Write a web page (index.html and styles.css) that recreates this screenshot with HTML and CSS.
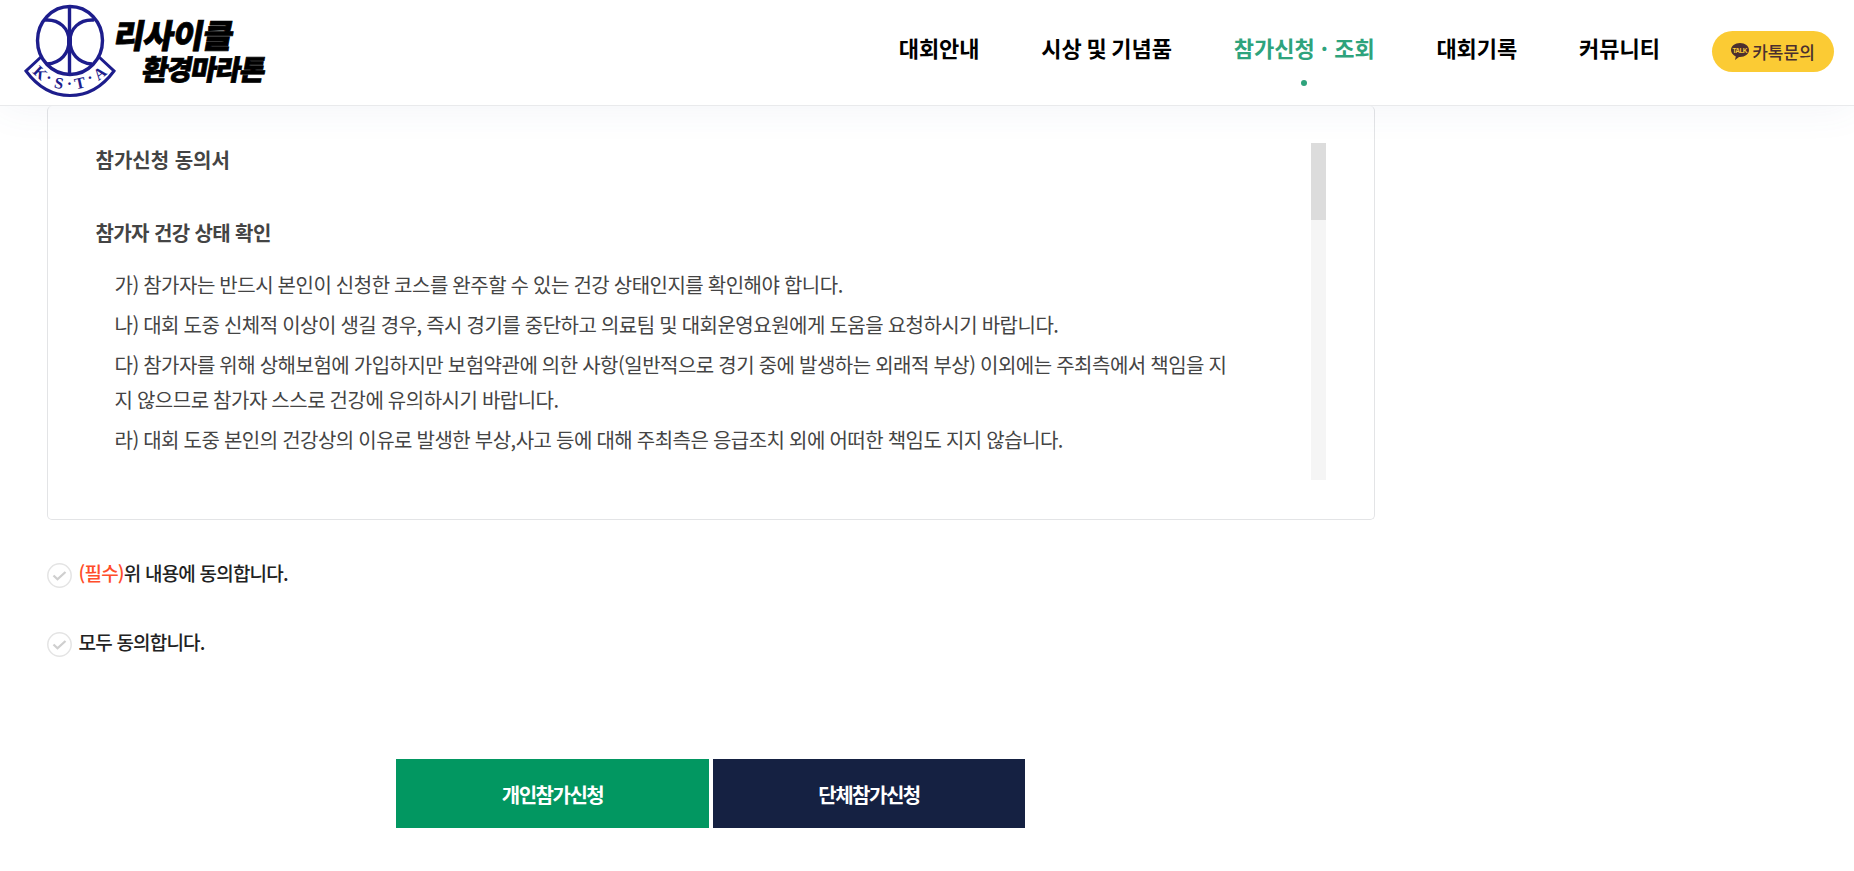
FILE: index.html
```html
<!DOCTYPE html>
<html lang="ko">
<head>
    <meta charset="UTF-8">
    <meta name="viewport" content="width=device-width, initial-scale=1.0">
    <title>리사이클 환경마라톤</title>
    <link rel="stylesheet" href="styles.css">
</head>
<body>

<header class="header">
    <a class="logo" href="#">
        <svg class="logo-mark" width="92" height="94" viewBox="0 0 92 94">
            <g fill="none" stroke="#1d1d8c" stroke-width="3.4">
                <ellipse cx="46" cy="36.500" rx="32.500" ry="34"/>
                <path d="M45.500 3v68"/>
                <path d="M21 16c15-1 24 9 24 21s-8 22-22 23"/>
                <path d="M70 16c-15-1-24 9-24 21s8 22 22 23"/>
                <path stroke-width="3" d="M17 53L2 67Q20 91.500 46 91.500T90 67L75 53"/>
            </g>
            <path d="M43 26h5v22h-5z" fill="#1d1d8c"/>
            <g class="logo-letters">
                <text transform="translate(16 69) rotate(43)" dy="5">K</text>
                <text transform="translate(25 75)" dy="4">·</text>
                <text transform="translate(35 79.500) rotate(12)" dy="5">S</text>
                <text transform="translate(45.500 81)" dy="4">·</text>
                <text transform="translate(56 79.500) rotate(-12)" dy="5">T</text>
                <text transform="translate(66 75)" dy="4">·</text>
                <text transform="translate(76 69.500) rotate(-38)" dy="5">A</text>
            </g>
        </svg>
        <span class="logo-name">
            <span class="logo-line1">리사이클</span>
            <span class="logo-line2">환경마라톤</span>
        </span>
    </a>
    <nav class="gnb">
        <a href="#">대회안내</a>
        <a href="#" class="narrow">시상 및 기념품</a>
        <a href="#" class="on">참가신청 · 조회</a>
        <a href="#">대회기록</a>
        <a href="#">커뮤니티</a>
    </nav>
    <a class="talk" href="#">
        <svg width="18" height="17" viewBox="0 0 18 17">
            <path d="M9 0c5 0 9 3 9 7s-4 7-9 7h-1l-4 3 .8-3.600C2 12.200 0 9.800 0 7c0-4 4-7 9-7z" fill="#4b2f2f"/>
            <text class="talk-text" x="1.500" y="9.700" textLength="15">TALK</text>
        </svg>
        <span>카톡문의</span>
    </a>
</header>

<main class="content">
    <section class="terms">
        <div class="terms-text">
            <h3>참가신청 동의서</h3>
            <h3 class="kern">참가자 건강 상태 확인</h3>
            <ul>
                <li>가) 참가자는 반드시 본인이 신청한 코스를 완주할 수 있는 건강 상태인지를 확인해야 합니다.</li>
                <li>나) 대회 도중 신체적 이상이 생길 경우, 즉시 경기를 중단하고 의료팀 및 대회운영요원에게 도움을 요청하시기 바랍니다.</li>
                <li>다) 참가자를 위해 상해보험에 가입하지만 보험약관에 의한 사항(일반적으로 경기 중에 발생하는 외래적 부상) 이외에는 주최측에서 책임을 지<br>지 않으므로 참가자 스스로 건강에 유의하시기 바랍니다.</li>
                <li>라) 대회 도중 본인의 건강상의 이유로 발생한 부상,사고 등에 대해 주최측은 응급조치 외에 어떠한 책임도 지지 않습니다.</li>
            </ul>
        </div>
        <div class="scrollbar"><div class="thumb"></div></div>
    </section>

    <div class="agree">
        <svg width="25" height="25" viewBox="0 0 25 25" fill="none"><circle cx="12.500" cy="12.500" r="11.700" stroke="#e4e4e4" stroke-width="1.500"/><path d="M6.500 12.500l4 3.800 8-7.300" stroke="#cfcfcf" stroke-width="2.300"/></svg>
        <span><em>(필수)</em>위 내용에 동의합니다.</span>
    </div>
    <div class="agree">
        <svg width="25" height="25" viewBox="0 0 25 25" fill="none"><circle cx="12.500" cy="12.500" r="11.700" stroke="#e4e4e4" stroke-width="1.500"/><path d="M6.500 12.500l4 3.800 8-7.300" stroke="#cfcfcf" stroke-width="2.300"/></svg>
        <span>모두 동의합니다.</span>
    </div>

    <div class="btn-wrap">
        <a href="#" class="btn btn-single">개인참가신청</a>
        <a href="#" class="btn btn-group">단체참가신청</a>
    </div>
</main>

</body>
</html>
```

FILE: styles.css
```css
* {
    box-sizing: border-box;
}

body {
    margin: 0;
    height: 871px;
    overflow: hidden;
    background-color: #fff;
    color: #222;
    font-family: "Noto Sans CJK KR", sans-serif;
}

a {
    color: inherit;
    text-decoration: none;
}

h3, ul {
    margin: 0;
    padding: 0;
    list-style: none;
}

/* Header */
.header {
    position: relative;
    display: flex;
    height: 106px;
    padding-left: 24px;
    padding-right: 20px;
    background-color: #fff;
    border-bottom: 1px solid #e9eaec;
    box-shadow: 0 0 40px rgba(82, 100, 150, 0.08);
}

.logo {
    display: flex;
    margin-right: auto;
}

.logo-mark {
    margin-top: 4px;
}

.logo-letters {
    fill: #1d1d8c;
    font-family: "Liberation Serif", serif;
    font-size: 16px;
    font-weight: bold;
    text-anchor: middle;
}

.logo-name {
    display: flex;
    flex-direction: column;
    margin-left: -1px;
    padding-top: 17px;
    color: #000;
    font-weight: 900;
    -webkit-text-stroke: 0.800px #000;
}

.logo-line1,
.logo-line2 {
    transform: skewX(-10deg);
    white-space: nowrap;
}

.logo-line1 {
    font-size: 33px;
    line-height: 34px;
    letter-spacing: -0.800px;
}

.logo-line2 {
    margin-left: 28px;
    font-size: 28px;
    line-height: 35px;
    letter-spacing: -1.400px;
}

.gnb {
    display: flex;
    gap: 61.700px;
    margin-right: 52px;
}

.gnb a {
    position: relative;
    color: #000;
    font-size: 22px;
    font-weight: 700;
    line-height: 95px;
    white-space: nowrap;
}

.gnb .narrow {
    word-spacing: -1.500px;
}

.gnb .on {
    color: #2ea37c;
}

.gnb .on::after {
    content: "";
    position: absolute;
    left: 50%;
    top: 80px;
    width: 6px;
    height: 6px;
    margin-left: -3px;
    border-radius: 50%;
    background-color: #2ea37c;
}

.talk {
    display: flex;
    align-items: center;
    justify-content: center;
    gap: 3px;
    width: 122px;
    height: 41px;
    margin-top: 31px;
    border-radius: 21px;
    background-color: #fbcb34;
    color: #4b2f2f;
    font-size: 17px;
    font-weight: 500;
}

.talk svg {
    margin-bottom: 1px;
}

.talk-text {
    fill: #fbcb34;
    font-family: "Liberation Sans", sans-serif;
    font-size: 6.500px;
    font-weight: bold;
}

/* Terms */
.content {
    width: 1328px;
    margin-left: 47px;
}

.terms {
    display: flex;
    justify-content: space-between;
    height: 414px;
    padding: 37px 48px 0 47.500px;
    border: 1px solid #e3e4e6;
    border-top: 0;
    border-radius: 5px;
    color: #444;
    font-size: 20px;
    line-height: 35px;
}

.terms-text {
    margin-top: -1px;
}

.terms h3 {
    font-size: 20px;
    font-weight: 700;
    line-height: 35px;
    margin-bottom: 38px;
}

.terms .kern {
    letter-spacing: -0.600px;
    margin-bottom: 17px;
}

.terms li {
    margin: 0 0 5px 19px;
    letter-spacing: -0.500px;
    word-spacing: -0.550px;
    white-space: nowrap;
}

.scrollbar {
    width: 15px;
    height: 337px;
    background-color: #f5f5f5;
}

.thumb {
    height: 77px;
    background-color: #dcdcdc;
}

/* Agreement */
.agree {
    display: flex;
    gap: 6.500px;
    height: 25px;
    margin-top: 44px;
    font-size: 19px;
    font-weight: 500;
    line-height: 20px;
    letter-spacing: -0.800px;
}

.terms + .agree {
    margin-top: 43px;
}

.agree em {
    color: #ff4d2a;
    font-style: normal;
}

.btn-wrap {
    display: flex;
    justify-content: center;
    gap: 4px;
    margin-top: 102px;
    padding-right: 1px;
}

.btn {
    width: 313px;
    height: 69px;
    color: #fff;
    font-size: 20px;
    font-weight: 700;
    line-height: 71px;
    letter-spacing: -1.500px;
    text-align: center;
}

.btn-single {
    background-color: #029761;
}

.btn-group {
    width: 312px;
    background-color: #152142;
}
```
